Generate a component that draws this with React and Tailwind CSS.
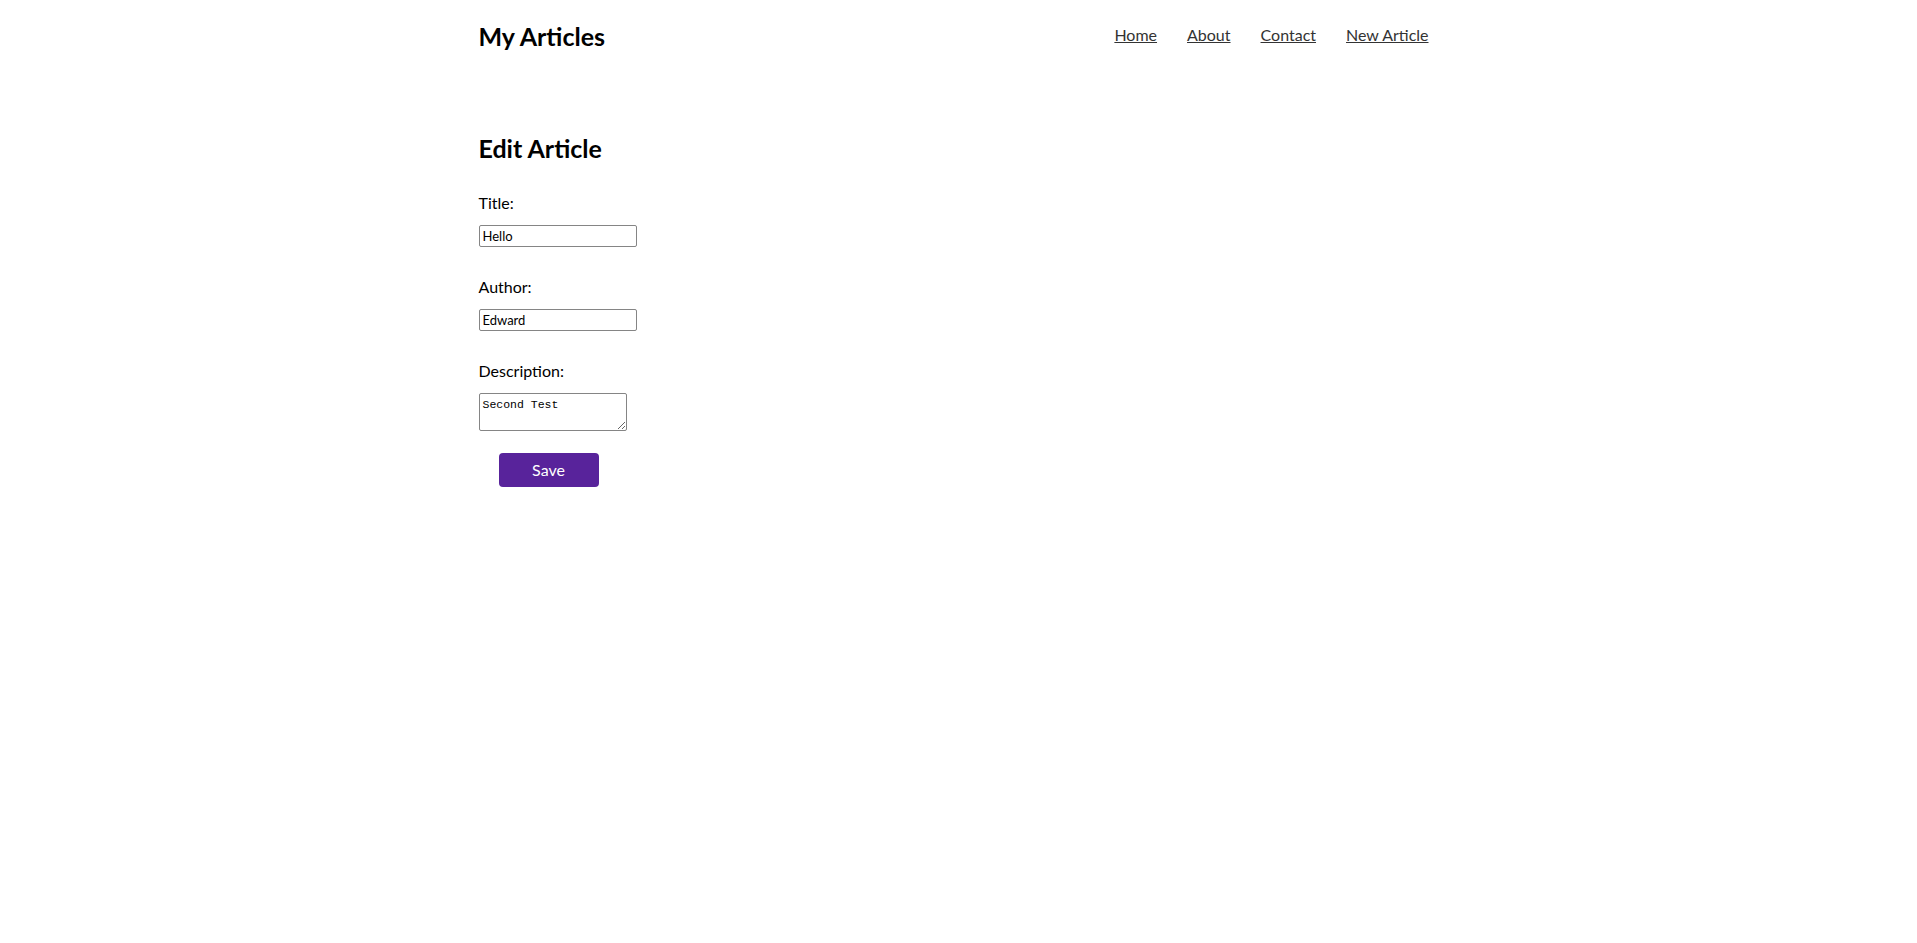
export default function App() {
  const font = { fontFamily: "Lato, 'Noto Sans', sans-serif" };
  return (
    <div className="min-h-screen bg-white text-black" style={font}>
      <div className="max-w-[960px] mx-auto">
        <header className="flex justify-between items-start pt-[22px]">
          <h1 className="text-[25px] leading-[29px] font-bold">My Articles</h1>
          <nav className="flex gap-[30px] pr-[10px] mt-[3px] text-[16px] leading-[20px]">
            <a href="#" className="underline text-[#333]">Home</a>
            <a href="#" className="underline text-[#333]">About</a>
            <a href="#" className="underline text-[#333]">Contact</a>
            <a href="#" className="underline text-[#333]">New Article</a>
          </nav>
        </header>
        <main className="mt-[83px]">
          <h2 className="text-[25px] leading-[29px] font-bold">Edit Article</h2>
          <form className="mt-[28px] flex flex-col items-start" onSubmit={(e) => e.preventDefault()}>
            <label className="block text-[16px] leading-[24px]">Title:</label>
            <input
              defaultValue="Hello"
              className="mt-[10px] w-[158px] h-[22px] border border-[#858585] rounded-[2px] px-[3px] text-[13px] text-black outline-none"
              style={font}
            />
            <label className="block mt-[28px] text-[16px] leading-[24px]">Author:</label>
            <input
              defaultValue="Edward"
              className="mt-[10px] w-[158px] h-[22px] border border-[#858585] rounded-[2px] px-[3px] text-[13px] text-black outline-none"
              style={font}
            />
            <label className="block mt-[28px] text-[16px] leading-[24px]">Description:</label>
            <textarea
              defaultValue="Second Test"
              className="mt-[10px] w-[148px] h-[38px] border border-[#858585] rounded-[2px] px-[3px] pt-[4px] pb-[2px] text-[11.5px] leading-[14px] text-black outline-none resize"
              style={{ fontFamily: "'Liberation Mono', 'DejaVu Sans Mono', monospace" }}
            />
            <button
              type="submit"
              className="mt-[22px] ml-[20px] w-[100px] h-[34px] rounded-[4px] bg-[#58239b] text-white text-[16px]"
            >
              Save
            </button>
          </form>
        </main>
      </div>
    </div>
  );
}
